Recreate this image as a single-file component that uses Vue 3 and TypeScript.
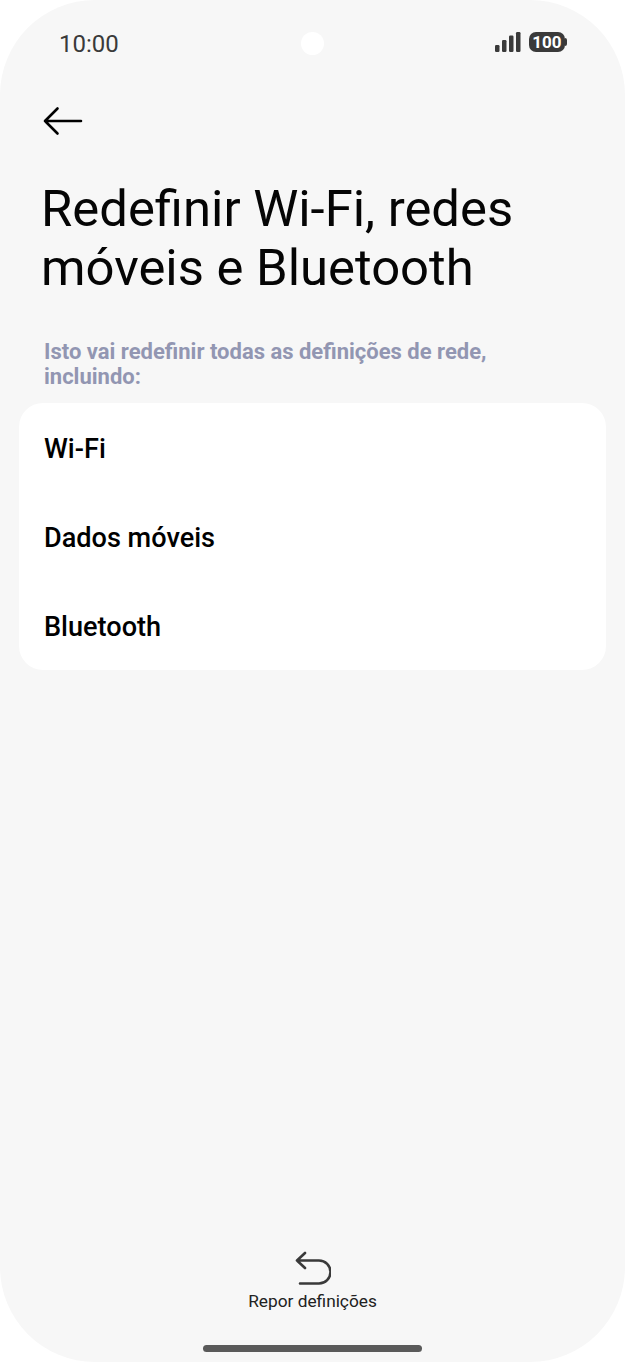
<script setup lang="ts">
const itens = ['Wi-Fi', 'Dados móveis', 'Bluetooth']
</script>

<template>
  <div class="ecra">
    <header class="estado">
      <span class="hora">10:00</span>
      <span class="camara"></span>
      <div class="icones">
        <svg width="26" height="20" viewBox="0 0 26 20" fill="#3a3a3a">
          <rect x="0" y="13" width="4.500" height="7" rx="1.200" />
          <rect x="7" y="8" width="4.500" height="12" rx="1.200" />
          <rect x="14" y="3.500" width="4.500" height="16.500" rx="1.200" />
          <rect x="21" y="0" width="4.500" height="20" rx="1.200" />
        </svg>
        <span class="bateria">100</span>
      </div>
    </header>

    <svg class="voltar" width="40" height="34" viewBox="0 0 40 34" fill="none" stroke="#000" stroke-width="2.600" stroke-linecap="round" stroke-linejoin="round">
      <path d="M38 17H2M14.500 4.500 2 17l12.500 12.500" />
    </svg>

    <h1>Redefinir Wi-Fi, redes móveis e Bluetooth</h1>
    <p class="aviso">Isto vai redefinir todas as definições de rede, incluindo:</p>

    <ul class="cartao">
      <li v-for="item in itens" :key="item">{{ item }}</li>
    </ul>

    <footer class="rodape">
      <svg width="36" height="34" viewBox="0 0 36 34" fill="none" stroke="#3a3a3a" stroke-width="2.600" stroke-linecap="round" stroke-linejoin="round">
        <path d="M10 2 2 9.500l8 7.500M2 9.500H24a11.500 11.500 0 0 1 0 23H5" />
      </svg>
      <span>Repor definições</span>
      <div class="barra"></div>
    </footer>
  </div>
</template>

<style>
html, body { margin: 0; background: #fff; }
</style>

<style scoped>
.ecra {
  width: 625px;
  height: 1362px;
  background: #f7f7f7;
  border-radius: 95px;
  font-family: Roboto, sans-serif;
  display: flex;
  flex-direction: column;
  overflow: hidden;
}
.estado {
  position: relative;
  height: 24px;
  margin-top: 32px;
  padding: 0 60px 0 59px;
  display: flex;
  justify-content: space-between;
  align-items: flex-start;
}
.hora { font-size: 24px; line-height: 24px; color: #3a3a3a; }
.camara {
  position: absolute;
  left: 300.500px;
  top: 0;
  width: 23px;
  height: 23px;
  border-radius: 50%;
  background: #fff;
}
.icones { display: flex; align-items: center; gap: 8px; }
.bateria {
  position: relative;
  width: 36px;
  height: 20px;
  border-radius: 7px;
  background: #3a3a3a;
  color: #fff;
  font-size: 17px;
  font-weight: 700;
  line-height: 20px;
  text-align: center;
}
.bateria::after {
  content: '';
  position: absolute;
  right: -2px;
  top: 6px;
  width: 2px;
  height: 8px;
  border-radius: 0 2px 2px 0;
  background: #3a3a3a;
}
.voltar { margin: 48px 0 0 43px; display: block; flex: none; }
h1 {
  margin: 41px 41px 0;
  font-size: 50.800px;
  font-weight: 400;
  line-height: 59px;
  color: #050505;
}
.aviso {
  margin: 42px 100px 0 44px;
  font-size: 22px;
  font-weight: 700;
  line-height: 25px;
  color: #9296b2;
}
.cartao {
  list-style: none;
  margin: 14px 19px 0;
  padding: 0;
  background: #fff;
  border-radius: 24px;
}
.cartao li {
  height: 89px;
  padding-left: 25px;
  font-size: 27.100px;
  font-weight: 500;
  line-height: 92px;
  color: #000;
}
.rodape {
  margin-top: auto;
  padding-bottom: 10px;
  display: flex;
  flex-direction: column;
  align-items: center;
}
.rodape span { margin-top: 6px; font-size: 17.300px; color: #222; }
.barra {
  width: 219px;
  height: 7px;
  margin-top: 34px;
  border-radius: 4px;
  background: #5a5a5a;
}
</style>
